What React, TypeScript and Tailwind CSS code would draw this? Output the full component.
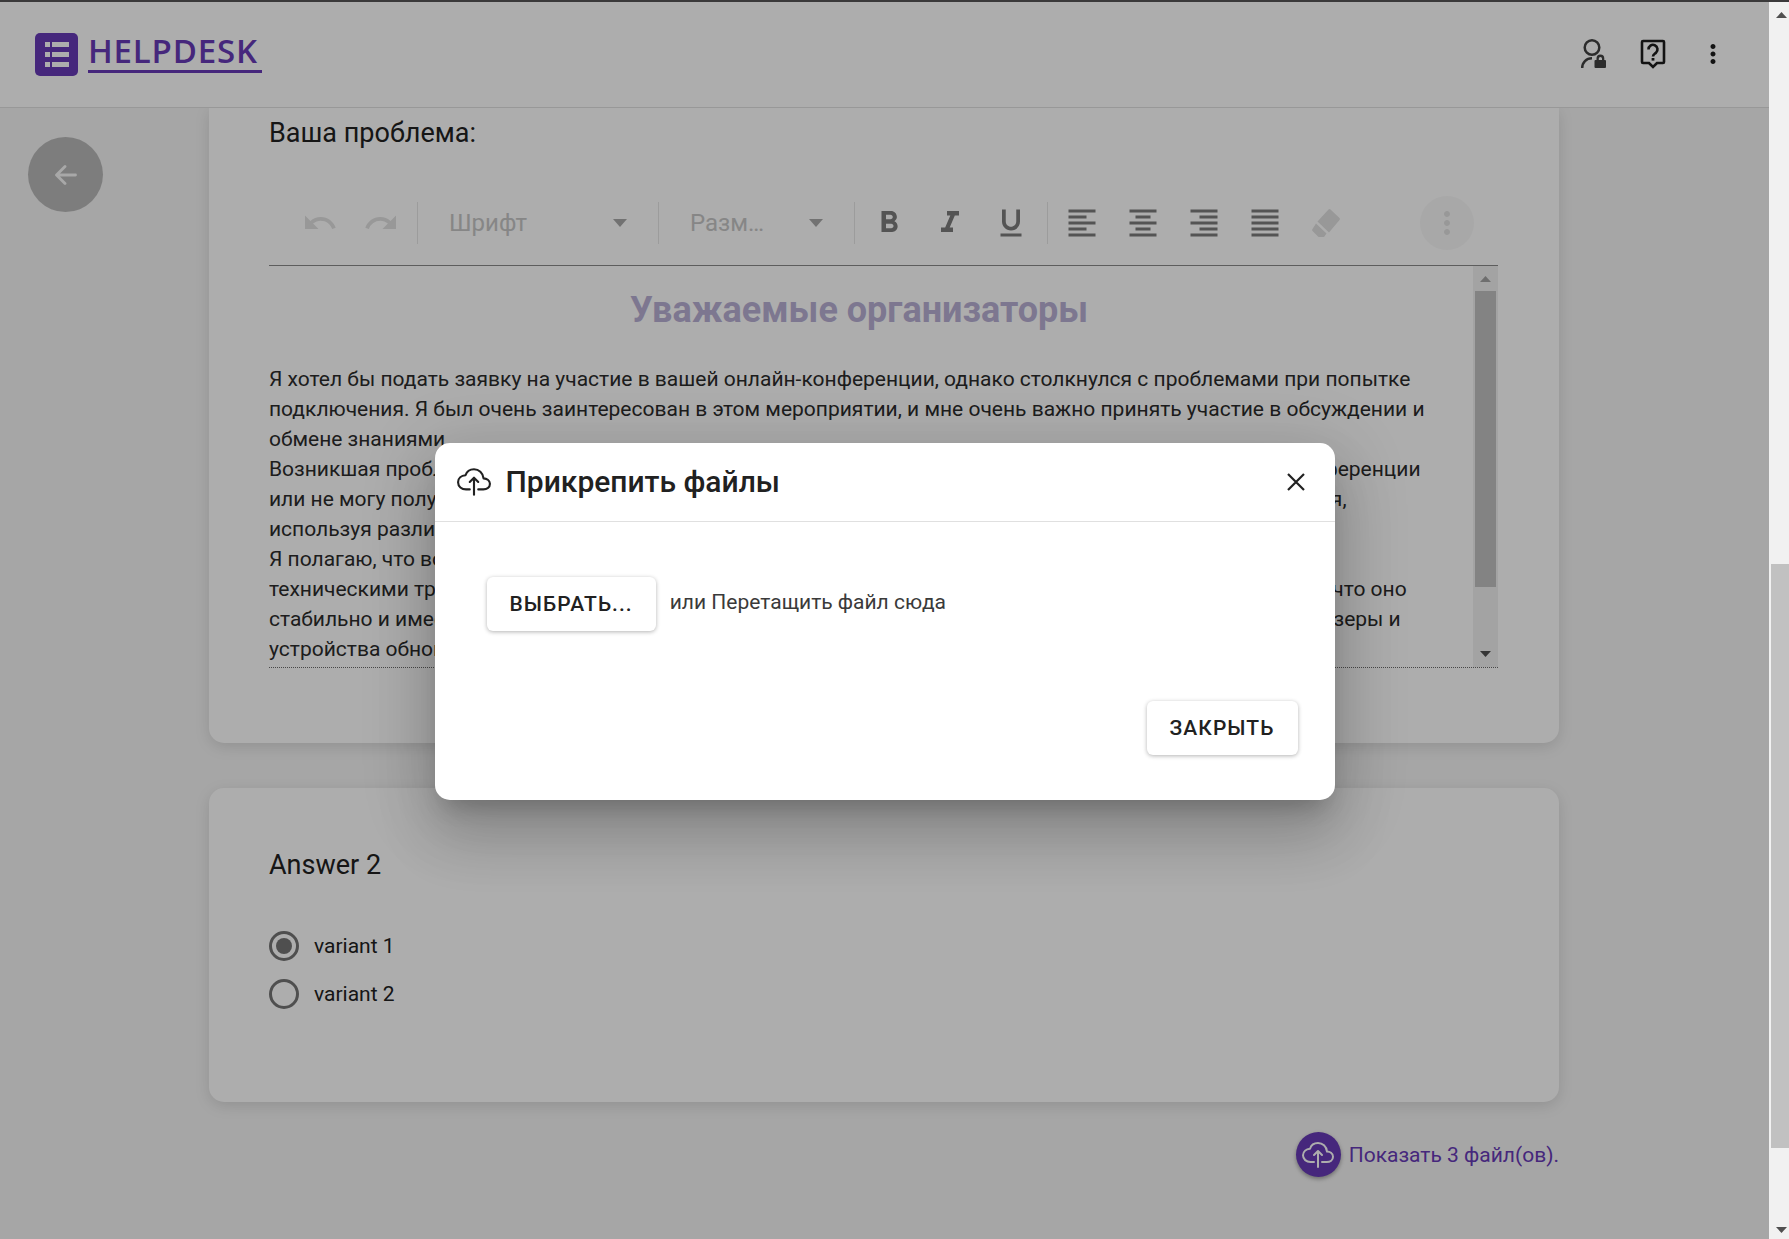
import React from "react";
import { IoCloudUploadOutline } from "react-icons/io5";
import {
  MdFormatBold,
  MdFormatItalic,
  MdFormatUnderlined,
  MdFormatAlignLeft,
  MdFormatAlignCenter,
  MdFormatAlignRight,
  MdFormatAlignJustify,
  MdMoreVert,
  MdUndo,
  MdRedo,
} from "react-icons/md";

function Logo() {
  return (
    <a href="#" className="flex items-start gap-2.5 text-[#673ab7]">
      <svg viewBox="0 0 43 43" className="size-[43px]" aria-hidden="true">
        <rect width="43" height="43" rx="5" fill="#673ab7" />
        <g fill="#fff">
          <rect x="10" y="9" width="5" height="5" />
          <rect x="17" y="9" width="17" height="5" />
          <rect x="10" y="19" width="5" height="5" />
          <rect x="17" y="19" width="17" height="5" />
          <rect x="10" y="29" width="5" height="5" />
          <rect x="17" y="29" width="17" height="5" />
        </g>
      </svg>
      <span className="border-b-3 border-[#673ab7] pr-1 pb-px font-['Open_Sans',sans-serif] text-[33px] leading-9 font-semibold tracking-wide">
        HELPDESK
      </span>
    </a>
  );
}

function Header() {
  return (
    <header className="flex h-[108px] shrink-0 items-center justify-between border-t-2 border-b border-t-[#565456] border-b-[#e0e0e0] bg-white pr-[34px] pb-px pl-[35px]">
      <Logo />
      <nav className="flex items-center gap-4">
        <button aria-label="Аккаунт" className="grid size-11 place-items-center text-[#424242]">
          <svg viewBox="0 0 30 32" className="h-8 w-[30px]" fill="none" aria-hidden="true">
            <circle cx="14" cy="9.500" r="7.300" stroke="currentColor" strokeWidth="2.500" />
            <path d="M4.200 30c0-5.500 4-9.700 9.800-9.700" stroke="currentColor" strokeWidth="2.500" />
            <path
              fill="currentColor"
              fillRule="evenodd"
              d="M18.500 22v-1.500a3.900 3.900 0 0 1 7.800 0V22H27a1 1 0 0 1 1 1v6a1 1 0 0 1-1 1h-9.500a1 1 0 0 1-1-1v-6a1 1 0 0 1 1-1h1zm2.300 0h3.200v-1.500a1.600 1.600 0 0 0-3.200 0V22z"
            />
          </svg>
        </button>
        <button aria-label="Помощь" className="grid size-11 place-items-center text-[#1c1c1c]">
          <svg viewBox="0 0 26 30" className="h-[30px] w-[26px]" fill="none" aria-hidden="true">
            <path
              d="M3 2h20a1 1 0 0 1 1 1v20a1 1 0 0 1-1 1h-6l-4 4-4-4H3a1 1 0 0 1-1-1V3a1 1 0 0 1 1-1z"
              stroke="currentColor"
              strokeWidth="2.600"
            />
            <path
              d="M8.500 10.500a4.500 4.500 0 1 1 7.500 3.200c-1.600 1.400-3 2-3 3.800"
              stroke="currentColor"
              strokeWidth="2.600"
            />
            <rect x="11.600" y="19" width="2.800" height="2.600" fill="currentColor" />
          </svg>
        </button>
        <button aria-label="Меню" className="grid size-11 place-items-center text-[#1c1c1c]">
          <MdMoreVert className="size-[30px]" />
        </button>
      </nav>
    </header>
  );
}

function Caret() {
  return (
    <svg viewBox="0 0 14 8" className="pointer-events-none h-2 w-3.5 shrink-0 fill-[#a8a8a8]" aria-hidden="true">
      <path d="M0 0h14l-7 8z" />
    </svg>
  );
}

function PickList({ label, text, className }: { label: string; text: string; className: string }) {
  return (
    <div className={"flex h-[42px] items-center border-l border-[#e6e6e6] pr-[31px] pl-[31px] " + className}>
      <select
        aria-label={label}
        className="min-w-0 flex-1 appearance-none bg-transparent text-2xl leading-8 text-[#c6c6c6]"
      >
        <option>{text}</option>
      </select>
      <Caret />
    </div>
  );
}

function Tool({ label, children }: { label: string; children: React.ReactNode }) {
  return (
    <button aria-label={label} className="grid h-12 w-[61px] shrink-0 place-items-center text-[#7c7c7c]">
      {children}
    </button>
  );
}

function Toolbar() {
  return (
    <div className="flex items-center border-b border-[#8a8a8a] pt-11 pb-[15px] pl-5">
      <div className="flex flex-1 items-center">
        <Tool label="Отменить">
          <MdUndo className="size-9 text-[#e0e0e0]" />
        </Tool>
        <Tool label="Повторить">
          <MdRedo className="size-9 text-[#e0e0e0]" />
        </Tool>
        <div className="w-1.5" />
        <PickList label="Шрифт" text="Шрифт" className="w-[241px]" />
        <PickList label="Размер" text="Разм…" className="w-[196px]" />
        <div className="flex h-[42px] items-center border-l border-[#e6e6e6] pr-1.5 pl-[3px]">
          <Tool label="Полужирный">
            <MdFormatBold className="size-9" />
          </Tool>
          <Tool label="Курсив">
            <MdFormatItalic className="size-9" />
          </Tool>
          <Tool label="Подчёркнутый">
            <MdFormatUnderlined className="size-9" />
          </Tool>
        </div>
        <div className="flex h-[42px] items-center border-l border-[#e6e6e6] pl-[3px]">
          <Tool label="По левому краю">
            <MdFormatAlignLeft className="size-9" />
          </Tool>
          <Tool label="По центру">
            <MdFormatAlignCenter className="size-9" />
          </Tool>
          <Tool label="По правому краю">
            <MdFormatAlignRight className="size-9" />
          </Tool>
          <Tool label="По ширине">
            <MdFormatAlignJustify className="size-9" />
          </Tool>
          <Tool label="Очистить">
            <svg viewBox="0 0 30 30" className="size-[30px] fill-[#e0e0e0]" aria-hidden="true">
              <path d="M17.500 1.500a1.500 1.500 0 0 1 2 0l9 8.500a1.500 1.500 0 0 1 0 2.100L18 24.500 6.500 13.500z" />
              <path d="M5 15.500 15.500 25.500 13 29H8.500a2 2 0 0 1-1.500-.6L1.500 23a1.500 1.500 0 0 1 0-2.100z" />
            </svg>
          </Tool>
        </div>
      </div>
      <button aria-label="Ещё" className="mr-6 grid size-[54px] shrink-0 place-items-center rounded-full bg-[#f8f8f8]">
        <MdMoreVert className="size-9 text-[#e0e0e0]" />
      </button>
    </div>
  );
}

const lines = [
  "Я хотел бы подать заявку на участие в вашей онлайн-конференции, однако столкнулся с проблемами при попытке",
  "подключения. Я был очень заинтересован в этом мероприятии, и мне очень важно принять участие в обсуждении и",
  "обмене знаниями.",
  "Возникшая проблема проявляется в том, что я не могу подключиться к веб-платформе вашей онлайн-конференции",
  "или не могу получить доступ к странице. Я уже несколько раз пытался выполнить повторные подключения,",
  "используя различные браузеры и устройства.",
  "Я полагаю, что возможно проблема связана с сетью.",
  "техническими требованиями. Я проверил своё домашнее интернет-соединение и тут могу подтвердить то, что оно",
  "стабильно и имеет хорошую скорость. Также я дополнительно убедился, что все используемые мною браузеры и",
  "устройства обновлены до последних версий.",
];

function Editor() {
  return (
    <div className="flex h-[402px] border-b border-dotted border-[#6a6a6a]">
      <div
        role="textbox"
        aria-label="Ваша проблема"
        className="min-w-0 flex-1 overflow-hidden pt-[22px] pr-6 text-[#2c2c2c]"
      >
        <h2 className="mb-8 text-center text-4xl leading-11 font-bold text-[#b8b0d4]">Уважаемые организаторы</h2>
        {lines.map((line) => (
          <p key={line} className="text-[21px] leading-[30px] whitespace-nowrap">
            {line}
          </p>
        ))}
      </div>
      <div className="flex w-[25px] shrink-0 flex-col items-center bg-[#f1f1f1]">
        <svg viewBox="0 0 25 25" className="size-[25px] shrink-0 fill-[#a3a3a3]" aria-hidden="true">
          <path d="M7 16h11l-5.500-6z" />
        </svg>
        <div className="h-[296px] w-[21px] bg-[#c1c1c1]" />
        <div className="flex-1" />
        <svg viewBox="0 0 25 25" className="size-[25px] shrink-0 fill-[#505050]" aria-hidden="true">
          <path d="M7 9h11l-5.500 6z" />
        </svg>
      </div>
    </div>
  );
}

function Variant({ label, checked }: { label: string; checked?: boolean }) {
  return (
    <label className="flex items-center gap-[15px] text-[21px] leading-[30px]">
      <input
        type="radio"
        name="answer2"
        defaultChecked={checked}
        className="size-[30px] appearance-none rounded-full border-3 border-[#757575] p-1 checked:bg-[#757575] checked:bg-clip-content"
      />
      {label}
    </label>
  );
}

function AttachDialog() {
  return (
    <div
      role="dialog"
      aria-modal="true"
      aria-labelledby="attach-title"
      className="w-[900px] max-w-full rounded-[15px] bg-white text-[#212121] shadow-[0_16px_22px_-10px_rgba(0,0,0,0.2),0_36px_57px_4px_rgba(0,0,0,0.14),0_13px_69px_12px_rgba(0,0,0,0.12)]"
    >
      <div className="flex h-[79px] items-center border-b border-[#e0e0e0] pr-[30px] pl-[22px]">
        <IoCloudUploadOutline className="size-[34px] shrink-0" />
        <h1 id="attach-title" className="flex-1 pl-[15px] text-3xl leading-10 font-medium">
          Прикрепить файлы
        </h1>
        <button aria-label="Закрыть окно">
          <svg viewBox="0 0 18 18" className="size-[18px] stroke-[#212121]" strokeWidth="2.200" aria-hidden="true">
            <path d="M1 1l16 16M17 1L1 17" />
          </svg>
        </button>
      </div>
      <div className="flex items-center gap-3.5 px-[52px] pt-[55px]">
        <button className="h-[54px] rounded-md bg-white px-[23px] pt-0.5 text-[21px] font-medium tracking-wider shadow-[0_1px_4px_rgba(0,0,0,0.3)]">
          ВЫБРАТЬ...
        </button>
        <span className="pb-1 text-[21px] leading-[30px] text-[#3a3a3a]">или Перетащить файл сюда</span>
      </div>
      <div className="flex justify-end px-[37px] pt-[70px] pb-[45px]">
        <button className="h-[54px] rounded-md bg-white px-[23px] pt-0.5 text-[21px] font-medium tracking-wider shadow-[0_1px_4px_rgba(0,0,0,0.3)]">
          ЗАКРЫТЬ
        </button>
      </div>
    </div>
  );
}

function PageScrollbar() {
  return (
    <div className="flex w-5 shrink-0 flex-col border-t-2 border-[#3c3a3c] bg-[#f1f1f1]">
      <svg viewBox="0 0 20 25" className="h-[25px] w-5 shrink-0 fill-[#505050]" aria-hidden="true">
        <path d="M7 16h11l-5.500-6z" />
      </svg>
      <div className="flex-[537]" />
      <div className="ml-0.5 flex-[584] bg-[#c1c1c1]" />
      <div className="flex-[66]" />
      <svg viewBox="0 0 20 25" className="h-[25px] w-5 shrink-0 fill-[#505050]" aria-hidden="true">
        <path d="M7 13h11l-5.500 6z" />
      </svg>
    </div>
  );
}

export default function App() {
  return (
    <div className="flex h-screen overflow-hidden font-[Roboto,sans-serif] text-[#212121]">
      <div className="relative flex min-w-0 flex-1 flex-col bg-[#f5f5f5]">
        <Header />
        <main className="flex min-h-0 flex-1 items-start overflow-hidden">
          <div className="w-[209px] shrink-0 pt-[29px] pl-7">
            <button aria-label="Назад" className="grid size-[75px] place-items-center rounded-full bg-[#b9b9b9]">
              <svg
                viewBox="0 0 22 20"
                className="h-5 w-[22px] stroke-[#f8f8f8]"
                fill="none"
                strokeWidth="2.800"
                strokeLinecap="round"
                strokeLinejoin="round"
                aria-hidden="true"
              >
                <path d="M10 1.500L1.500 10l8.500 8.500M2 10h18.500" />
              </svg>
            </button>
          </div>
          <div className="flex min-w-0 flex-1 flex-col">
            <section className="rounded-b-[15px] bg-white pt-[6px] pr-[61px] pb-[75px] pl-[60px] shadow-[0_4px_15px_rgba(0,0,0,0.12)]">
              <h2 className="text-[27px] leading-[38px]">Ваша проблема:</h2>
              <Toolbar />
              <Editor />
            </section>
            <section className="mt-[45px] rounded-[15px] bg-white px-[60px] pt-[58px] pb-[93px] shadow-[0_4px_15px_rgba(0,0,0,0.12)]">
              <h2 className="text-[27px] leading-[38px]">Answer 2</h2>
              <div className="flex flex-col gap-[18px] pt-[47px]">
                <Variant label="variant 1" checked />
                <Variant label="variant 2" />
              </div>
            </section>
            <a href="#" className="mt-[30px] flex items-center gap-2 self-end text-[21px] leading-[30px] text-[#673ab7]">
              <span className="grid size-[45px] place-items-center rounded-full bg-[#673ab7] text-white shadow-[0_2px_4px_rgba(0,0,0,0.35)]">
                <IoCloudUploadOutline className="size-8" />
              </span>
              Показать 3 файл(ов).
            </a>
          </div>
          <div className="w-[210px] shrink-0" />
        </main>
        <div className="absolute inset-0 grid place-items-center bg-black/32 pt-[3px]">
          <AttachDialog />
        </div>
      </div>
      <PageScrollbar />
    </div>
  );
}
